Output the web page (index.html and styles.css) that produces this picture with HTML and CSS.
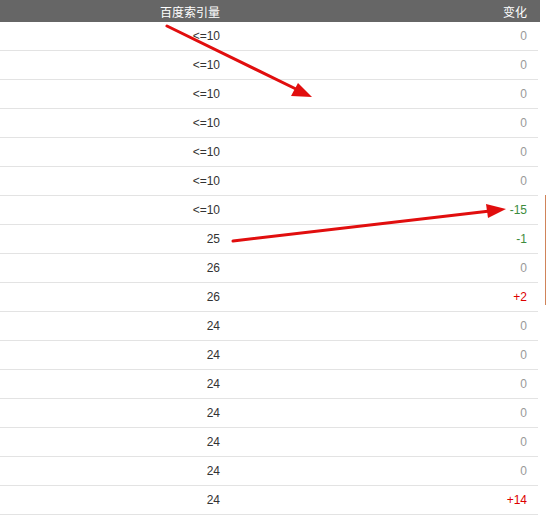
FILE: index.html
```html
<!DOCTYPE html>
<html lang="zh-CN">
<head>
  <meta charset="UTF-8" />
  <title>百度索引量</title>
  <link rel="stylesheet" href="styles.css">
</head>
<body>
  <div class="table">
    <div class="row head">
      <div class="cell"></div>
      <div class="cell">百度索引量</div>
      <div class="cell">变化</div>
    </div>
    <div class="row"><div class="cell"></div><div class="cell">&lt;=10</div><div class="cell zero">0</div></div>
    <div class="row"><div class="cell"></div><div class="cell">&lt;=10</div><div class="cell zero">0</div></div>
    <div class="row"><div class="cell"></div><div class="cell">&lt;=10</div><div class="cell zero">0</div></div>
    <div class="row"><div class="cell"></div><div class="cell">&lt;=10</div><div class="cell zero">0</div></div>
    <div class="row"><div class="cell"></div><div class="cell">&lt;=10</div><div class="cell zero">0</div></div>
    <div class="row"><div class="cell"></div><div class="cell">&lt;=10</div><div class="cell zero">0</div></div>
    <div class="row"><div class="cell"></div><div class="cell">&lt;=10</div><div class="cell down">-15</div></div>
    <div class="row"><div class="cell"></div><div class="cell">25</div><div class="cell down">-1</div></div>
    <div class="row"><div class="cell"></div><div class="cell">26</div><div class="cell zero">0</div></div>
    <div class="row"><div class="cell"></div><div class="cell">26</div><div class="cell up">+2</div></div>
    <div class="row"><div class="cell"></div><div class="cell">24</div><div class="cell zero">0</div></div>
    <div class="row"><div class="cell"></div><div class="cell">24</div><div class="cell zero">0</div></div>
    <div class="row"><div class="cell"></div><div class="cell">24</div><div class="cell zero">0</div></div>
    <div class="row"><div class="cell"></div><div class="cell">24</div><div class="cell zero">0</div></div>
    <div class="row"><div class="cell"></div><div class="cell">24</div><div class="cell zero">0</div></div>
    <div class="row"><div class="cell"></div><div class="cell">24</div><div class="cell zero">0</div></div>
    <div class="row"><div class="cell"></div><div class="cell">24</div><div class="cell up">+14</div></div>
  </div>

  <!-- Markierung am Rand -->
  <div class="side-mark"></div>

  <!-- Pfeile -->
  <svg class="arrows" width="546" height="516" viewBox="0 0 546 516">
    <line x1="167" y1="26" x2="298" y2="90" stroke="#e10e0e" stroke-width="3" stroke-linecap="round" />
    <polygon points="312,97 291,96 298,83" fill="#e10e0e" />
    <line x1="233" y1="241" x2="490" y2="211" stroke="#e10e0e" stroke-width="3" stroke-linecap="round" />
    <polygon points="506,209 488,218 486,204" fill="#e10e0e" />
  </svg>
</body>
</html>
```

FILE: styles.css
```css
body {
  margin: 0;
  font-family: 'Liberation Sans', Arial, 'Noto Sans CJK SC', sans-serif;
  font-size: 12px;
  color: #333;
  background: #fff;
  position: relative;
  overflow: hidden;
}

.table {
  width: 538px;
}

.row {
  display: grid;
  grid-template-columns: 120px 108px 310px;
  height: 28px;
  border-bottom: 1px solid #e3e3e3;
}

.cell {
  display: flex;
  align-items: center;
  justify-content: flex-end;
  white-space: nowrap;
}

.cell:nth-child(2) {
  padding-right: 8px;
}

.cell:nth-child(3) {
  padding-right: 11px;
}

.head {
  height: 22px;
  width: 540px;
  background: #666;
  color: #fff;
  border-bottom: none;
}

.zero {
  color: #999;
}

.down {
  color: #3d8b3d;
}

.up {
  color: #d00;
}

.side-mark {
  position: absolute;
  left: 545px;
  top: 195px;
  width: 1px;
  height: 110px;
  background: #d0845a;
}

.arrows {
  position: absolute;
  left: 0;
  top: 0;
  pointer-events: none;
}
```
